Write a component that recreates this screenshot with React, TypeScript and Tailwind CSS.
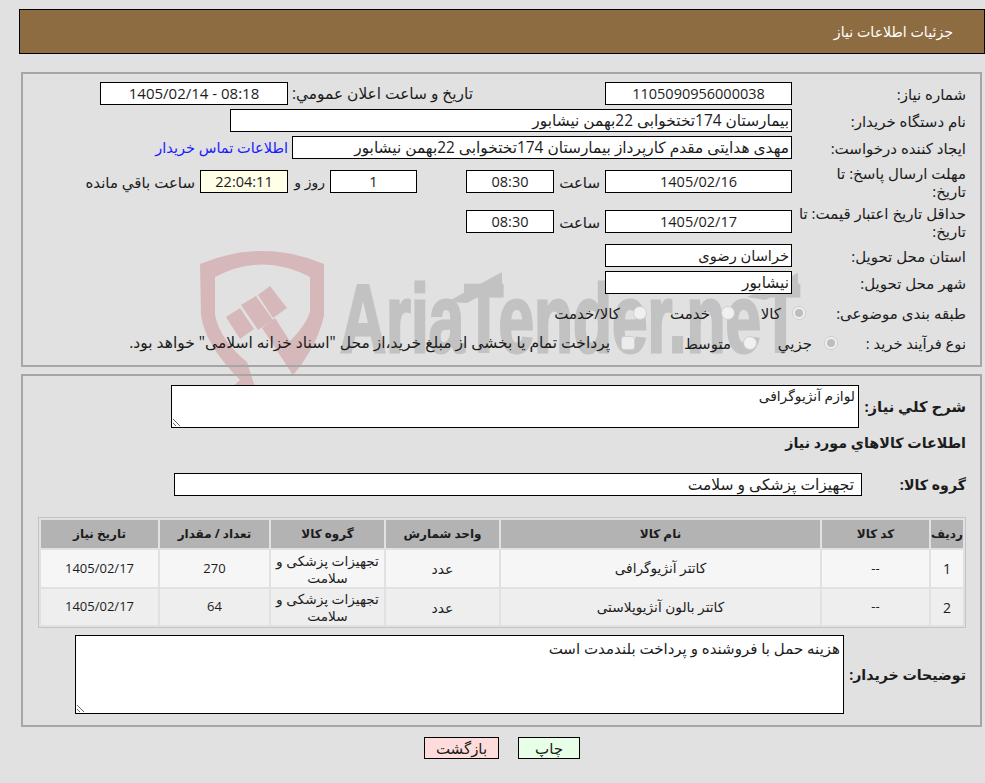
import type { ReactNode } from "react";

const font = "font-['Open_Sans','DejaVu_Sans',sans-serif]";

function Field({ className, children }: { className: string; children?: ReactNode }) {
  return (
    <div className={`shrink-0 border border-black h-[23px] leading-[21px] text-[14.5px] text-center bg-white whitespace-nowrap overflow-hidden ${className}`}>
      {children}
    </div>
  );
}

function TextField({ className, children }: { className: string; children?: ReactNode }) {
  return (
    <div className={`shrink-0 border border-black h-[23px] leading-[21px] text-[15.4px] text-right pr-[2px] bg-white whitespace-nowrap overflow-hidden ${className}`}>
      {children}
    </div>
  );
}

function Label({ children, className }: { children: ReactNode; className?: string }) {
  return <div className={`shrink-0 text-[15px] leading-[18px] whitespace-nowrap ${className || ""}`}>{children}</div>;
}

function Radio({ checked }: { checked?: boolean }) {
  return (
    <span className="shrink-0 w-[14px] h-[14px] rounded-full border border-[#cfcfcf] bg-[#f0f0f0] flex items-center justify-center">
      {checked && <span className="w-[8px] h-[8px] rounded-full bg-[#bdbdbd]" />}
    </span>
  );
}

function Watermark() {
  return (
    <svg className="absolute left-0 top-0 pointer-events-none" width="985" height="400" viewBox="0 0 985 400">
      <text
        x="340"
        y="352"
        direction="ltr"
        fontFamily="'Liberation Sans',sans-serif"
        fontWeight="700"
        fontSize="96"
        fill="#c2c2c2"
        stroke="#c2c2c2"
        strokeWidth="3"
        textLength="460"
        lengthAdjust="spacingAndGlyphs"
      >
        AriaTender.neT
      </text>
      <g fill="#c2c2c2">
        <path d="M447 302L502 272L502 284L467 303Z" />
        <path d="M747 297L798 273L798 285L765 300Z" />
      </g>
      <g fill="#d7b8ba">
        <path d="M200 264Q262 238 324 264L324 315Q318 345 293 375L278 352Q304 330 310 312L310 277Q262 252 215 277L215 315Q220 340 247 362L255 387L232 387L240 380Q205 345 201 315Z" />
        <path d="M226 317L240 308L254 329L240 339Z" />
        <path d="M241 305L256 296L273 320L258 330Z" />
        <path d="M258 295L270 286L287 308L273 318Z" />
        <path d="M262 328L275 318L303 362L293 375L278 352Z" />
      </g>
    </svg>
  );
}

const rows = [
  { id: "1", name: "کاتتر آنژیوگرافی", qty: "270", bg: "bg-[#f6f6f6]", h: "h-[37px]" },
  { id: "2", name: "کاتتر بالون آنژیوپلاستی", qty: "64", bg: "bg-[#eeeeee]", h: "h-[36px]" },
];

const headers = [
  { t: "ردیف", w: "w-[32px]" },
  { t: "کد کالا", w: "w-[107px]" },
  { t: "نام کالا", w: "w-[319px]" },
  { t: "واحد شمارش", w: "w-[113px]" },
  { t: "گروه کالا", w: "w-[113px]" },
  { t: "تعداد / مقدار", w: "w-[109px]" },
  { t: "تاریخ نیاز", w: "w-[117px]" },
];

export default function App() {
  return (
    <div dir="rtl" className={`relative w-[985px] h-[783px] bg-[#e1e1e1] overflow-hidden text-[#1c1c1c] ${font}`}>
      <Watermark />

      <div className="relative pt-[9px]">
        <div className="mr-0 ml-[19px] h-[45px] bg-[#8e6c41] border border-black flex items-center pr-[31px] text-white text-[14.2px]">
          جزئیات اطلاعات نیاز
        </div>
      </div>

      {/* main details */}
      <div className="relative ml-[21px] mr-[3px] mt-[18px] h-[295px] border-2 border-[#a6a6a6] pt-[8px] pr-[14px]">
        <div className="flex items-center h-[23px] mb-[4px]">
          <Label className="w-[174px]">شماره نیاز:</Label>
          <Field className="w-[187px]">1105090956000038</Field>
          <Label className="mr-[132px] w-[185px] !text-[15.4px]">تاریخ و ساعت اعلان عمومي:</Label>
          <Field className="w-[188px] !text-[15px]">08:18 - 1405/02/14</Field>
        </div>
        <div className="flex items-center h-[23px] mb-[4px]">
          <Label className="w-[174px]">نام دستگاه خریدار:</Label>
          <TextField className="w-[562px]">بیمارستان 174تختخوابی 22بهمن نیشابور</TextField>
        </div>
        <div className="flex items-center h-[23px] mb-[4px]">
          <Label className="w-[174px]">ایجاد کننده درخواست:</Label>
          <TextField className="w-[500px]">مهدی هدایتی مقدم کارپرداز بیمارستان 174تختخوابی 22بهمن نیشابور</TextField>
          <a className="mr-[4px] text-[14.5px] text-[#1a1aff] whitespace-nowrap">اطلاعات تماس خریدار</a>
        </div>
        <div className="flex items-center h-[37px] mb-[3px]">
          <Label className="w-[174px]">مهلت ارسال پاسخ: تا<br />تاریخ:</Label>
          <Field className="w-[187px]">1405/02/16</Field>
          <Label className="w-[51px] pr-[5px]">ساعت</Label>
          <Field className="w-[88px]">08:30</Field>
          <Field className="w-[87px] mr-[49px]">1</Field>
          <Label className="w-[42px] pr-[5px] !text-[14px]">روز و</Label>
          <Field className="w-[88px] !bg-[#ffffe8]">22:04:11</Field>
          <Label className="pr-[5px]">ساعت باقي مانده</Label>
        </div>
        <div className="flex items-center h-[37px] mb-[4px]">
          <Label className="w-[174px]">حداقل تاریخ اعتبار قیمت: تا<br />تاریخ:</Label>
          <Field className="w-[187px]">1405/02/17</Field>
          <Label className="w-[51px] pr-[5px]">ساعت</Label>
          <Field className="w-[88px]">08:30</Field>
        </div>
        <div className="flex items-center h-[23px] mb-[4px]">
          <Label className="w-[174px]">استان محل تحویل:</Label>
          <TextField className="w-[187px] !text-[14.6px]">خراسان رضوی</TextField>
        </div>
        <div className="flex items-center h-[23px]">
          <Label className="w-[174px]">شهر محل تحویل:</Label>
          <TextField className="w-[187px]">نیشابور</TextField>
        </div>
        <div className="flex items-center h-[30px] mt-[4px]">
          <Label className="w-[160px]">طبقه بندی موضوعی:</Label>
          <div className="flex items-center gap-[11px] w-[71px]"><Radio checked /><span className="text-[15px]">کالا</span></div>
          <div className="flex items-center gap-[11px] w-[88px]"><Radio /><span className="text-[15px]">خدمت</span></div>
          <div className="flex items-center gap-[13px]"><Radio /><span className="text-[15px]">کالا/خدمت</span></div>
        </div>
        <div className="flex items-center h-[30px]">
          <Label className="w-[128px] !text-[14.7px]">نوع فرآیند خرید :</Label>
          <div className="flex items-center gap-[12px] w-[81px]"><Radio checked /><span className="text-[15px]">جزیي</span></div>
          <div className="flex items-center gap-[12px] w-[122px]"><Radio /><span className="text-[15px]">متوسط</span></div>
          <div className="flex items-center gap-[11px]">
            <span className="shrink-0 w-[14px] h-[14px] rounded-[3px] border border-[#cfcfcf] bg-[#ececec]" />
            <span className="text-[15.5px] whitespace-nowrap">پرداخت تمام یا بخشی از مبلغ خرید،از محل "اسناد خزانه اسلامی" خواهد بود.</span>
          </div>
        </div>
      </div>

      {/* goods */}
      <div className="relative ml-[21px] mr-[3px] mt-[7px] h-[353px] border-2 border-[#a6a6a6] pt-[9px] pr-[14px]">
        <div className="flex items-center">
          <div className="w-[107px] text-[14.8px] font-bold whitespace-nowrap">شرح كلي نياز:</div>
          <textarea
            readOnly
            defaultValue="لوازم آنژیوگرافی"
            className="block w-[688px] h-[43px] border border-black bg-white text-[13.8px] leading-[18px] px-[3px] py-[1px] outline-none"
          />
        </div>
        <div className="mt-[5px] h-[20px] leading-[20px] text-[14.3px] font-bold whitespace-nowrap">اطلاعات کالاهاي مورد نياز</div>
        <div className="flex items-center mt-[20px]">
          <div className="w-[104px] text-[14.2px] font-bold whitespace-nowrap">گروه کالا:</div>
          <div className="w-[688px] h-[23px] border border-black bg-white text-[15.5px] leading-[21px] pr-[7px] whitespace-nowrap">تجهیزات پزشکی و سلامت</div>
        </div>
        <table className="mt-[21px] w-[928px] table-fixed border-separate border-spacing-[2px] border border-[#c4c4c4]">
          <thead>
            <tr className="h-[28px]">
              {headers.map(h => (
                <th key={h.t} className={`${h.w} p-0 bg-[#b3b3b3] text-[12px] font-bold text-center whitespace-nowrap overflow-hidden`}>{h.t}</th>
              ))}
            </tr>
          </thead>
          <tbody>
            {rows.map(r => (
              <tr key={r.id} className={r.h}>
                <td className={`${r.bg} p-0 text-center text-[14px]`}>{r.id}</td>
                <td className={`${r.bg} p-0 text-center text-[13px]`}>--</td>
                <td className={`${r.bg} p-0 text-center text-[13.7px]`}>{r.name}</td>
                <td className={`${r.bg} p-0 text-center text-[14px]`}>عدد</td>
                <td className={`${r.bg} p-0 text-center text-[13.7px] leading-[17px]`}>تجهیزات پزشکی و سلامت</td>
                <td className={`${r.bg} p-0 text-center text-[13px]`}>{r.qty}</td>
                <td className={`${r.bg} p-0 text-center text-[13px]`}>1405/02/17</td>
              </tr>
            ))}
          </tbody>
        </table>
        <div className="flex items-center mt-[7px]">
          <div className="w-[122px] text-[14.2px] font-bold whitespace-nowrap">توضیحات خریدار:</div>
          <textarea
            readOnly
            defaultValue="هزینه حمل با فروشنده و پرداخت بلندمدت است"
            className="block w-[769px] h-[79px] border border-black bg-white text-[15px] leading-[18px] px-[3px] py-[3px] outline-none"
          />
        </div>
      </div>

      <div className="relative flex justify-center gap-[19px] mt-[10px] pl-[19px]">
        <button className="w-[62px] h-[22px] border border-black bg-[#e6ffe6] text-[15px] leading-[20px]">چاپ</button>
        <button className="w-[75px] h-[22px] border border-black bg-[#ffdcdc] text-[15px] leading-[20px]">بازگشت</button>
      </div>
    </div>
  );
}
